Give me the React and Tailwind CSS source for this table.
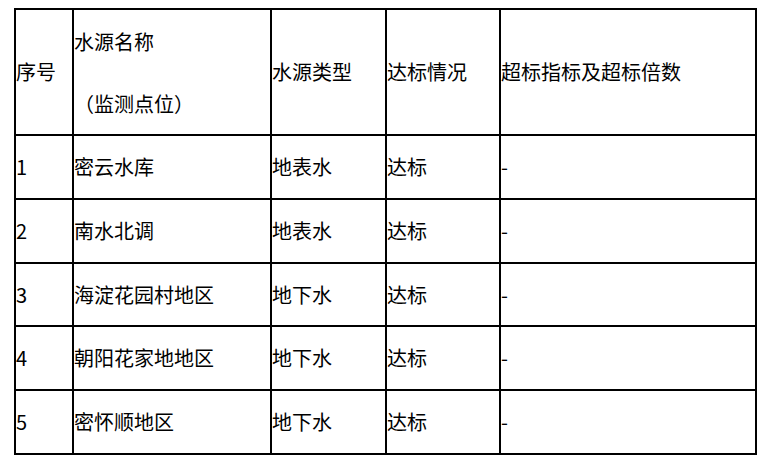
import React from 'react'

const rows = [
  ['1', '密云水库', '地表水', '达标', '-'],
  ['2', '南水北调', '地表水', '达标', '-'],
  ['3', '海淀花园村地区', '地下水', '达标', '-'],
  ['4', '朝阳花家地地区', '地下水', '达标', '-'],
  ['5', '密怀顺地区', '地下水', '达标', '-'],
]

export default function App() {
  return (
    <div
      className="bg-white w-[765px] h-[466px] pt-[8px] pl-[14px] text-black text-[20px]"
      style={{ fontFamily: '"Noto Sans CJK SC", "Noto Sans", sans-serif' }}
    >
      <div className="grid grid-cols-[56px_196px_113px_112px_254px] grid-rows-[124px_62px_62px_61px_62px_62px] gap-[2px] bg-black p-[2px] w-fit">
        {/* Header */}
        <div className="bg-white flex items-center">序号</div>
        <div className="bg-white flex flex-col justify-center leading-[31px]">
          <div>水源名称</div>
          <div className="h-[31px]" />
          <div>（监测点位）</div>
        </div>
        <div className="bg-white flex items-center">水源类型</div>
        <div className="bg-white flex items-center">达标情况</div>
        <div className="bg-white flex items-center">超标指标及超标倍数</div>

        {rows.map((r) =>
          r.map((cell, i) => (
            <div key={r[0] + '-' + i} className="bg-white flex items-center">
              {cell}
            </div>
          ))
        )}
      </div>
    </div>
  )
}
